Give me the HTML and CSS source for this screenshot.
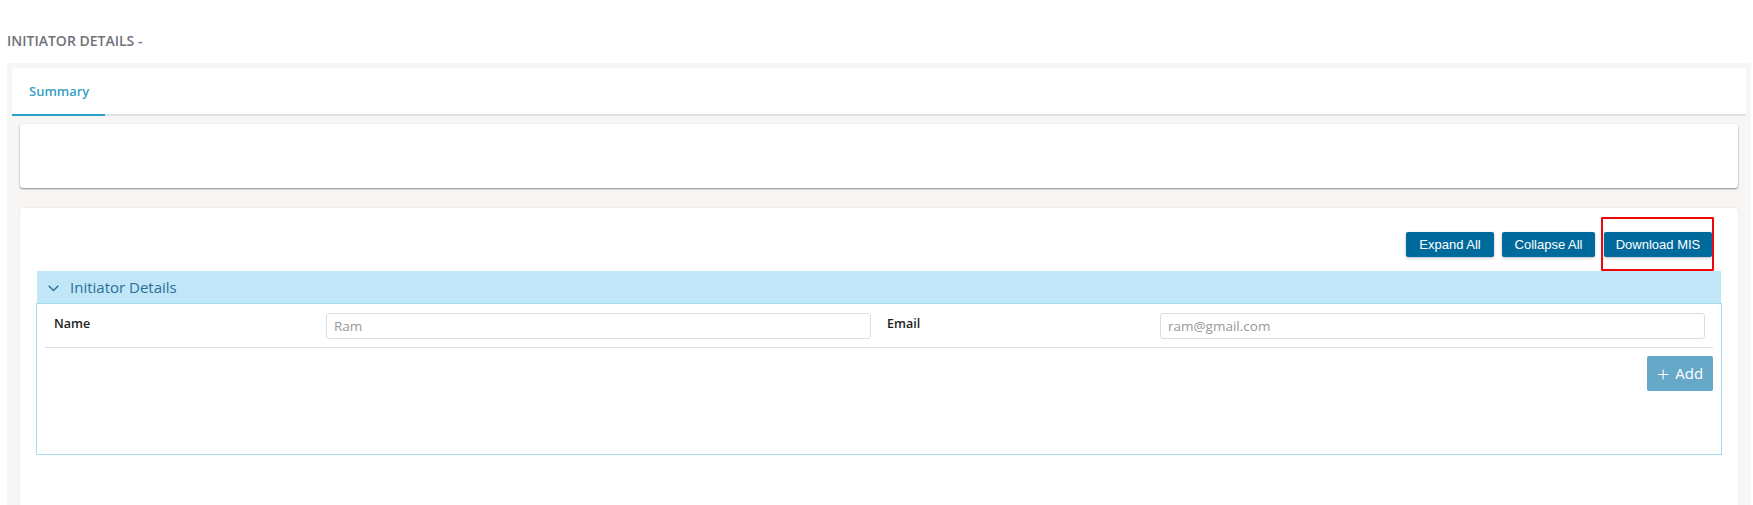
FILE: index.html
```html
<!DOCTYPE html>
<html>
<head>
<meta charset="utf-8">
<link rel="stylesheet" href="styles.css">
</head>
<body>
  <h1 class="page-title">INITIATOR DETAILS -</h1>
  <div class="shell">
    <div class="tabs">
      <div class="tab active">Summary</div>
    </div>
    <div class="cards">
      <div class="card card-empty"></div>
      <div class="card card-main">
        <div class="toolbar">
          <button class="btn btn-expand">Expand All</button>
          <button class="btn btn-collapse">Collapse All</button>
          <div class="highlight-wrap">
            <button class="btn btn-download">Download MIS</button>
            <span class="highlight"></span>
          </div>
        </div>
        <div class="panel">
          <div class="panel-head">
            <svg class="chev" width="11" height="7" viewBox="0 0 11 7"><path d="M0.7 0.7 L5.5 5.5 L10.3 0.7" fill="none" stroke="#2a6e9b" stroke-width="1.4"/></svg>
            <span class="panel-title">Initiator Details</span>
          </div>
          <div class="panel-body">
            <div class="field-row">
              <label class="field-label">Name</label>
              <input class="field-input" type="text" value="Ram" readonly>
              <label class="field-label second">Email</label>
              <input class="field-input" type="text" value="ram@gmail.com" readonly>
            </div>
            <div class="add-row">
              <button class="btn-add"><span class="plus">+</span>Add</button>
            </div>
          </div>
        </div>
      </div>
    </div>
  </div>
</body>
</html>
```
FILE: styles.css
```css
* { box-sizing: border-box; }
html, body { margin: 0; padding: 0; background: #fff; }
body {
  font-family: "Open Sans", "Liberation Sans", sans-serif;
  height: 505px;
  overflow: hidden;
}

.page-title {
  margin: 31px 0 13px 7px;
  font-size: 14px;
  line-height: 19px;
  font-weight: 600;
  color: #707379;
  letter-spacing: 0;
}

.shell {
  margin: 0 2px 0 7px;
  padding: 5px 5px 0 5px;
  background: #f7f6f4;
  height: 442px;
  overflow: hidden;
}

.tabs {
  display: flex;
  background: #fff;
  height: 48px;
  border-bottom: 2px solid #dde2e8;
}
.tab {
  width: 93px;
  padding-left: 17px;
  font-size: 13px;
  font-weight: 600;
  line-height: 46px;
  color: #3a9fc6;
  margin-bottom: -2px;
}
.tab.active { border-bottom: 2px solid #2aa3c8; }

.cards { padding: 8px 8px 0 8px; }
.card {
  background: #fff;
  border-radius: 3px;
}
.card-empty {
  height: 64px;
  box-shadow: 0 1px 2px rgba(0,0,0,0.45);
}
.card-main {
  margin-top: 20px;
  padding: 24px 17px 80px 17px;
  box-shadow: 0 0 2px rgba(0,0,0,0.12);
}

.toolbar {
  display: flex;
  justify-content: flex-end;
  padding-right: 9px;
  margin-bottom: 14px;
}
.btn {
  flex: none;
  height: 25px;
  padding: 0;
  border: 0;
  border-radius: 2px;
  background: #016a9c;
  color: #fff;
  font-family: "Liberation Sans", Arial, sans-serif;
  font-size: 13px;
  white-space: nowrap;
  text-align: center;
  box-shadow: 0 1px 3px rgba(0,0,0,0.25);
}
.btn-expand { width: 88px; margin-right: 8px; }
.btn-collapse { width: 93px; margin-right: 9px; }
.btn-download { width: 108px; }
.highlight-wrap { position: relative; display: flex; flex: none; }
.highlight {
  position: absolute;
  left: -3px; top: -15px; right: -2px; bottom: -14px;
  border: 2.5px solid #f00808;
  border-radius: 1px;
}

.panel-head {
  height: 32px;
  background: #c1e6f7;
  display: flex;
  align-items: center;
  padding-left: 11px;
}
.chev { margin-top: 2px; }
.panel-title {
  margin-left: 11px;
  font-size: 15px;
  color: #2a6e9b;
  line-height: 20px;
}

.panel-body {
  margin: 0 -1px;
  border: 1px solid #a6daf1;
  height: 152px;
  padding: 0 8px;
}
.field-row {
  display: grid;
  grid-template-columns: 272px 545px 289px 545px;
  padding: 9px 8px 8px 9px;
  border-bottom: 1px solid #dedede;
  align-items: start;
}
.field-label {
  font-size: 12.5px;
  font-weight: 600;
  color: #222;
  line-height: 18px;
  padding-top: 2px;
}
.field-label.second { padding-left: 16px; }
.field-input {
  height: 26px;
  border: 1px solid #dedede;
  border-radius: 3px;
  padding: 0 7px;
  font-family: "Open Sans", sans-serif;
  font-size: 13.5px;
  color: #999;
  background: #fff;
  outline: none;
}

.add-row {
  display: flex;
  justify-content: flex-end;
  padding-top: 8px;
}
.btn-add {
  width: 66px;
  height: 35px;
  border: 0;
  border-radius: 2px;
  background: #66a8c8;
  color: #fff;
  font-family: "Open Sans", sans-serif;
  font-size: 15px;
  display: flex;
  align-items: center;
  justify-content: center;
  padding: 0 0 2px 0;
}
.plus { font-size: 22px; font-weight: 300; margin-right: 6px; line-height: 20px; }
```
